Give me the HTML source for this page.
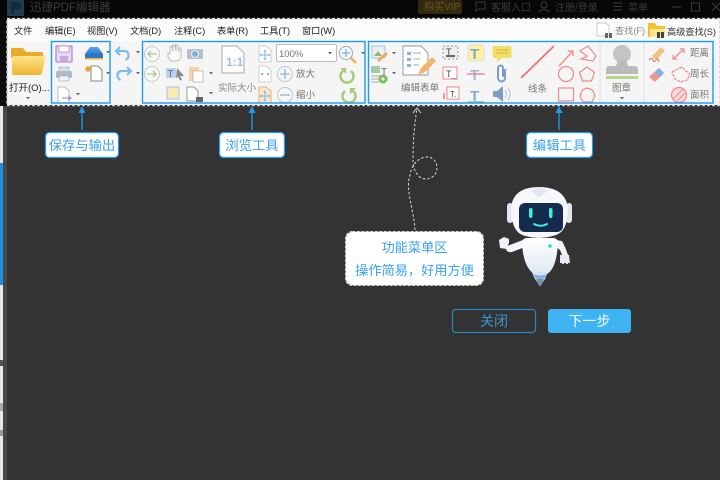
<!DOCTYPE html>
<html><head><meta charset="utf-8">
<style>
html,body{margin:0;padding:0;background:#333;width:720px;height:480px;overflow:hidden}
svg{display:block;position:absolute;left:0;top:0;filter:blur(.35px)}
text{font-family:"Liberation Sans","Noto Sans CJK SC",sans-serif}
</style></head><body>
<svg width="720" height="480" viewBox="0 0 720 480" xmlns="http://www.w3.org/2000/svg">
<defs>
<linearGradient id="folder" x1="0" y1="0" x2="0" y2="1"><stop offset="0" stop-color="#ffe58a"/><stop offset="1" stop-color="#eeb52e"/></linearGradient>
<linearGradient id="body" x1="0" y1="0" x2="0" y2="1"><stop offset="0" stop-color="#fff"/><stop offset="1" stop-color="#dfe9f5"/></linearGradient>
<linearGradient id="scan" x1="0" y1="0" x2="0" y2="1"><stop offset="0" stop-color="#5aa6e6"/><stop offset="1" stop-color="#2a7fd0"/></linearGradient>
<g id="tri"><path d="M0 0h4l-2 2.400z" fill="#666"/></g>
<g id="cross"><path d="M6 2v8M2 6h8" stroke="#7db8ea" stroke-width="1.100"/><path d="M6 .5l-1.800 2h3.600zM6 11.500l-1.800-2h3.600zM.5 6l2-1.800v3.600zM11.500 6l-2-1.800v3.600z" fill="#7db8ea"/></g>
</defs>
<!-- background -->
<rect width="720" height="480" fill="#333"/>
<rect x="0" y="105" width="3" height="375" fill="#e8e8e8"/>
<rect x="0" y="163" width="3" height="122" fill="#1c8fe0"/>
<rect x="3" y="105" width="4" height="375" fill="#484848"/>
<rect x="0" y="360" width="3" height="6" fill="#555"/>
<rect x="0" y="403" width="3" height="8" fill="#aaa"/>
<rect x="0" y="430" width="3" height="6" fill="#999"/>
<rect x="0" y="18" width="7" height="88" fill="#0c0c0c"/>
<!-- title bar -->
<rect width="720" height="18" fill="#070707"/>
<rect x="7" y="0" width="17" height="16" fill="#1f3d50"/>
<path d="M11 14V2h8l2 3v3l-2 2h-5v4z" fill="#14293a"/>
<text x="30" y="11" font-size="11.500" fill="#3c3c3c">迅捷PDF编辑器</text>
<rect x="418" y="0" width="44" height="14" rx="2" fill="#33290f"/>
<text x="424" y="10" font-size="10" fill="#6a5628">购买VIP</text>
<path d="M476 2h9v7h-6l-3 2z" fill="none" stroke="#3a3a3a"/>
<text x="491" y="11" font-size="10" fill="#3a3a3a">客服入口</text>
<circle cx="544" cy="5" r="3" fill="none" stroke="#3a3a3a"/><path d="M539 12q5-5 10 0" fill="none" stroke="#3a3a3a"/>
<text x="555" y="11" font-size="10" fill="#3a3a3a">注册/登录</text>
<path d="M613 3h9M613 6.500h9M613 10h9" stroke="#3a3a3a"/>
<text x="628" y="11" font-size="10" fill="#3a3a3a">菜单</text>
<path d="M672 7h9" stroke="#3a3a3a"/>
<rect x="691.500" y="3" width="8" height="8" fill="none" stroke="#3a3a3a"/>
<path d="M712 3l8 8M720 3l-8 8" stroke="#3a3a3a"/>

<!-- toolbar -->
<rect x="7" y="19" width="713" height="86" fill="#f5f5f5"/>
<rect x="7" y="19" width="713" height="22" fill="#fbfbfb"/>
<g font-size="9.200" fill="#1c1c1c">
<text x="14" y="34">文件</text><text x="45" y="34">编辑(E)</text><text x="87" y="34">视图(V)</text>
<text x="130" y="34">文档(D)</text><text x="174" y="34">注释(C)</text><text x="217" y="34">表单(R)</text>
<text x="260" y="34">工具(T)</text><text x="302" y="34">窗口(W)</text>
</g>
<!-- search right -->
<path d="M597 23h9l3 3v10h-12z" fill="#fff" stroke="#c8c8c8"/>
<rect x="605" y="33" width="3" height="5" fill="#667"/><rect x="609" y="33" width="3" height="5" fill="#667"/>
<text x="615" y="34" font-size="9.200" fill="#888">查找(F)</text>
<path d="M648 23h7l2 3h8v11h-17z" fill="#f2c230"/><path d="M650 29h15v8h-15z" fill="#ffe590"/>
<rect x="657" y="32" width="3" height="6" fill="#444"/><rect x="661" y="32" width="3" height="6" fill="#444"/>
<text x="667" y="35" font-size="9.200" fill="#333">高级查找(S)</text>

<!-- open -->
<path d="M11 49q0-1 1-1h11l3 4h15q2 0 2 2v4H11z" fill="#e9a92a"/>
<path d="M12 58q0-2 2-2h29q3 0 2 3l-3 14q-1 2-3 2H14q-2 0-2-2z" fill="url(#folder)"/>
<text x="9" y="91" font-size="9.500" fill="#222">打开(O)...</text>
<use href="#tri" x="26" y="97"/>

<!-- save group -->
<rect x="56" y="46" width="16" height="16" rx="1" fill="#e6d8ef" stroke="#b38ad0" stroke-width="1.300"/>
<rect x="59" y="46" width="10" height="6" fill="#fff" stroke="#b38ad0" stroke-width=".8"/>
<rect x="60" y="56" width="8" height="6" fill="#c7a8de"/>
<rect x="59" y="67" width="10" height="5" fill="#d8dde2" stroke="#9aa4ad" stroke-width=".6"/>
<rect x="56" y="71" width="16" height="7" rx="1" fill="#a9bccc"/>
<rect x="59" y="76" width="10" height="5" fill="#f3f3f3" stroke="#9aa4ad" stroke-width=".6"/>
<path d="M58 87h7l4 4v12H58z" fill="#fff" stroke="#bbb"/><path d="M62 98h9m-3-2l3 2-3 2" stroke="#a878d0" fill="none"/>
<use href="#tri" x="76" y="93"/>
<path d="M90 47h8l5 7H85z" fill="url(#scan)"/><rect x="85" y="54" width="18" height="4" fill="#2f75c0"/><rect x="85" y="58" width="18" height="1.500" fill="#e8b23a"/>
<use href="#tri" x="106" y="51"/>
<path d="M91 66h7l4 4v11H91z" fill="#fff" stroke="#888"/><circle cx="88" cy="69" r="2.800" fill="#f2a12e"/>
<use href="#tri" x="106" y="72"/>
<!-- undo redo -->
<path d="M120 47l-4 4 4 4M117 51h7q4.500 0 4.500 4.500 0 3-3 4.500" fill="none" stroke="#7dbbec" stroke-width="2.200"/>
<path d="M127 67l4 4-4 4M130 71h-8q-4.500 0-4.500 4.500 0 3 3 4.500" fill="none" stroke="#7dbbec" stroke-width="2.200"/>
<use href="#tri" x="136" y="51"/><use href="#tri" x="136" y="72"/>

<!-- browse group -->
<g fill="none" stroke="#c9c9c9">
<circle cx="152" cy="54" r="7.500" fill="#f8f8f8"/><circle cx="152" cy="74" r="7.500" fill="#f8f8f8"/></g>
<path d="M157 54h-9m3-3l-3 3 3 3" stroke="#a6cf8e" stroke-width="1.300" fill="none"/>
<path d="M147 74h9m-3-3l3 3-3 3" stroke="#a6cf8e" stroke-width="1.300" fill="none"/>
<path d="M170 47v7l-2-1v4q2 4 5 4h3q4 0 5-4v-9h-2v4l-1-7h-2v6l-1-6h-2v6l-1-5z" fill="#fafafa" stroke="#bbb"/>
<rect x="187" y="49" width="16" height="10" rx="1" fill="#b4c0cb"/><circle cx="195" cy="54" r="3.500" fill="#7cb1e2" stroke="#eee"/>
<rect x="166" y="68" width="10" height="10" fill="#bcd4ee"/><text x="167.500" y="77" font-size="10" fill="#667">T</text>
<path d="M177 68l7 8h-4l2 4-2 .5-2-4-2 2z" fill="#888"/>
<rect x="189" y="67" width="10" height="14" fill="#f5d3a6"/><rect x="193" y="71" width="10" height="11" fill="#fff" stroke="#aaa" stroke-width=".7"/>
<use href="#tri" x="209" y="72"/>
<rect x="167" y="87" width="12" height="12" fill="#fbe9ae" stroke="#9ec7ee"/>
<path d="M187 87h7l4 4v10H187z" fill="#fff" stroke="#999"/><rect x="196" y="97" width="7" height="5" fill="#666"/>
<use href="#tri" x="209" y="92"/>
<path d="M222 46h15l7 7v20h-22z" fill="#fff" stroke="#bbb" stroke-width="1.300"/>
<text x="226" y="66" font-size="12" font-weight="bold" fill="#9cc0dc">1:1</text>
<text x="218" y="91" font-size="9.500" fill="#888">实际大小</text>
<g fill="#fff" stroke="#c4c4c4" stroke-width=".8"><path d="M259 46h7l5 4v12h-12z"/><path d="M259 66h7l5 4v12h-12z"/></g>
<path d="M259 87h7l5 4v12h-12z" fill="#fbe7c8" stroke="#efb16a"/>
<use href="#cross" x="259" y="49"/><use href="#cross" x="259" y="90"/>
<g fill="#7db8ea"><rect x="261" y="73" width="2" height="2"/><rect x="267" y="73" width="2" height="2"/></g>
<rect x="276.500" y="44.500" width="60" height="17" rx="1.500" fill="#fff" stroke="#bbb"/>
<text x="279" y="57" font-size="9.500" fill="#777">100%</text><use href="#tri" x="328" y="52"/>
<circle cx="346" cy="53" r="6.500" fill="#f7fbff" stroke="#aaa"/><path d="M342 53h8M346 49v8" stroke="#6db2ea" stroke-width="1.300"/>
<path d="M351 58l5 5" stroke="#f0a83c" stroke-width="2.200"/>
<use href="#tri" x="361" y="52"/>
<circle cx="285" cy="74" r="7.500" fill="#f7f7f7" stroke="#bcc8d2"/><path d="M280 74h10M285 69v10" stroke="#86b5dd" stroke-width="1.300"/>
<text x="296" y="77" font-size="9.500" fill="#777">放大</text>
<circle cx="285" cy="95" r="7.500" fill="#f7f7f7" stroke="#bcc8d2"/><path d="M280 95h10" stroke="#86b5dd" stroke-width="1.300"/>
<text x="296" y="98" font-size="9.500" fill="#777">缩小</text>
<path d="M343 71a6.500 6.500 0 1 0 8 0" fill="none" stroke="#a5cb78" stroke-width="2.500"/><path d="M340 68h6v6z" fill="#a5cb78"/>
<path d="M353 91a6.500 6.500 0 1 1-8 0" fill="none" stroke="#a5cb78" stroke-width="2.500"/><path d="M356 88h-6v6z" fill="#a5cb78"/>

<!-- form group -->
<path d="M372 46h13v12h-13z" fill="#eee" stroke="#9ec7ee"/><path d="M374 56l4-5 4 5z" fill="#8bb87c"/>
<path d="M377 60l9-8 2 2-9 8z" fill="#f2a65e"/>
<use href="#tri" x="392" y="52"/>
<rect x="371" y="66" width="9" height="7" fill="#a5c9a0"/><text x="381" y="75" font-size="10" fill="#666">T</text>
<path d="M371 76h10M371 79h8M371 82h8" stroke="#aaa"/><circle cx="383" cy="79" r="4.500" fill="#7cbd5a"/><path d="M381 79h4M383 77v4" stroke="#fff"/>
<use href="#tri" x="392" y="72"/>
<path d="M403 46h18l7 7v22h-25z" fill="#fff" stroke="#aaa" stroke-width="1.200"/>
<g fill="#86b5dd"><rect x="407" y="52" width="4" height="3"/><rect x="407" y="58" width="4" height="3"/><rect x="407" y="64" width="4" height="3"/></g>
<path d="M413 53h8M413 59h7M413 65h6" stroke="#a8a8a8"/>
<path d="M418 75l3-7 11-11 4 4-11 11z" fill="#f5b26b"/>
<text x="401" y="91" font-size="9.500" fill="#777">编辑表单</text>
<rect x="443" y="46" width="15" height="13" fill="#eee" stroke="#999" stroke-dasharray="2 2"/><text x="446" y="55" font-size="9" fill="#444">T</text><path d="M446 56h9" stroke="#666" stroke-width="2"/>
<rect x="443" y="67" width="14" height="12" fill="#fff" stroke="#e88"/><text x="446" y="77" font-size="9" fill="#444">T_</text>
<rect x="447" y="87" width="12" height="12" fill="#fff" stroke="#e88"/><text x="450" y="97" font-size="8" fill="#444">T.</text><path d="M444 93v6" stroke="#d44"/>
<rect x="468" y="45" width="16" height="16" rx="3" fill="#fdf39a" stroke="#ddd"/><text x="470" y="59" font-size="15" font-weight="bold" fill="#7eaadf">T</text>
<text x="470" y="80" font-size="15" font-weight="bold" fill="#9bb9de">T</text><path d="M467 74h18" stroke="#e77" stroke-width="1.300"/>
<text x="470" y="101" font-size="15" font-weight="bold" fill="#7eaadf">T</text><path d="M468 102h16" stroke="#8bc88a" stroke-width="1.600"/>
<path d="M494 46h16q1.500 0 1.500 1.500v9q0 1.500-1.500 1.500h-8l-5 4v-4h-3q-1.500 0-1.500-1.500v-9q0-1.500 1.500-1.500z" fill="#f2df6a"/><path d="M496 50h12M496 53h12" stroke="#c6a92e" stroke-width=".8"/>
<path d="M505 69v9a3.500 3.500 0 0 1-7 0v-10a2 2 0 0 1 5 0v9" fill="none" stroke="#7a9ec8" stroke-width="2"/>
<path d="M493 91h4l6-5v16l-6-5h-4z" fill="#7a9ec8"/><path d="M505 90q3 4 0 8M508 88q4 6 0 12" stroke="#a8c0dc" fill="none"/>
<!-- lines -->
<path d="M521 78l33-32" stroke="#ee7272" stroke-width="1.700"/>
<text x="528" y="92" font-size="9.500" fill="#777">线条</text>
<path d="M559 66l14-15m-5 0h5v5" stroke="#ee8a8a" stroke-width="1.300" fill="none"/>
<path d="M580 51l8-5 8 10-3 5-12-2 6-3z" fill="none" stroke="#ee8a8a" stroke-width="1.200"/>
<circle cx="566" cy="74" r="7.500" fill="none" stroke="#ee8a8a" stroke-width="1.200"/>
<path d="M587 67l7.500 5.500-3 8.500h-9l-3-8.500z" fill="none" stroke="#ee8a8a" stroke-width="1.200"/>
<rect x="558.500" y="88" width="15" height="13" fill="none" stroke="#ee8a8a" stroke-width="1.200"/>
<path d="M587 88l5.500 2 2.500 6-3 6h-9l-3-6 2.500-6z" fill="none" stroke="#ee8a8a" stroke-width="1.200"/>
<path d="M600 42v61M644 42v61" stroke="#dedede"/>
<!-- stamp -->
<circle cx="622" cy="54" r="9" fill="#c4c4c4"/><path d="M618 60h8l2 6h7q3 0 3 4v4h-32v-4q0-4 3-4h7z" fill="#bbb"/>
<rect x="606" y="76" width="32" height="3" fill="#b7d58f"/>
<text x="612" y="91" font-size="9.500" fill="#777">图章</text>
<use href="#tri" x="620" y="97"/>
<!-- measure -->
<path d="M652 56l9-9 4 4-9 9z" fill="#f5c07a"/><path d="M649 60q3-3 4 0t3 0 3 2" stroke="#e66" fill="none"/>
<path d="M649 77l10-9 5 5-9 9z" fill="#ea9a8a"/><path d="M655 72l4-4 5 5-4 4z" fill="#74b6e6"/>
<path d="M673 59l11-10m-4 0h4v4m-11 2v4h4" stroke="#ee8a8a" fill="none" stroke-width="1.200"/>
<text x="690" y="56" font-size="9.500" fill="#777">距离</text>
<path d="M672 72l6-3 4-2 4 4 4 3-3 6-6 2-6-3z" fill="none" stroke="#ee8a8a" stroke-width="1.200" stroke-dasharray="3 1"/>
<text x="690" y="77" font-size="9.500" fill="#777">周长</text>
<circle cx="679" cy="95" r="7.500" fill="#f8dcdc" stroke="#ee8a8a" stroke-width="1.200"/><path d="M673 99l10-10M677 101l8-8" stroke="#ee8a8a"/>
<text x="690" y="98" font-size="9.500" fill="#777">面积</text>

<!-- blue boxes -->
<g fill="none" stroke="#1b9af0" stroke-width="1.400">
<rect x="51.500" y="41.500" width="58.500" height="61.500"/>
<rect x="142.500" y="41.500" width="222.500" height="61.500"/>
<rect x="368.500" y="41.500" width="344.500" height="61.500"/>
</g>
<!-- dashed toolbar border -->
<rect x="7" y="18.500" width="713" height="87" fill="none" stroke="#ccc" stroke-width="1.500" stroke-dasharray="3 2"/>

<!-- arrows + labels -->
<g stroke="#1b9af0" stroke-width="1.300" fill="#1b9af0">
<path d="M82 113v17M252 113v17M559 113v17" fill="none"/>
<path d="M82 106l-3.500 7h7z M252 106l-3.500 7h7z M559 106l-3.500 7h7z" stroke="none"/>
</g>
<g fill="#fff" stroke="#1b9af0" stroke-width="1.200">
<rect x="45.500" y="132.500" width="73" height="25" rx="4"/>
<rect x="219.500" y="132.500" width="65" height="25" rx="4"/>
<rect x="526.500" y="132.500" width="66" height="25" rx="4"/>
</g>
<g font-size="13.300" fill="#3aa3f0" text-anchor="middle">
<text x="82" y="150">保存与输出</text>
<text x="252" y="150">浏览工具</text>
<text x="559.500" y="150">编辑工具</text>
</g>

<!-- dashed curve -->
<path d="M415 230C414 210 405 190 410 175C412 163 420 157 427 157C434 157 437 163 437 168C437 175 431 179 426 179C419 179 414 172 413 163C413 145 414 125 417 109" fill="none" stroke="#d8d8d8" stroke-dasharray="2.500 2"/>
<path d="M413 113l4-5 4 5" fill="none" stroke="#d8d8d8"/>
<!-- callout -->
<rect x="345.500" y="231.500" width="138" height="54" rx="7" fill="#fff" stroke="#777"/>
<rect x="345.500" y="231.500" width="138" height="54" rx="7" fill="none" stroke="#ddd" stroke-dasharray="2.500 2"/>
<g font-size="13.200" fill="#3aa3f0" text-anchor="middle">
<text x="414.500" y="252">功能菜单区</text>
<text x="414.500" y="275">操作简易，好用方便</text>
</g>

<!-- robot -->
<g>
<!-- left arm + hand -->
<path d="M499 240l5-3 5 2 0 4-3 6-6-1z" fill="#eef2f7"/>
<path d="M507 246l16-6 2 7-13 5q-5 1-6-3z" fill="#f2f5fa"/>
<!-- right arm + hand -->
<path d="M556 240l6 1 3 6 3 8h-6l-2-5-5-4z" fill="#eef2f7"/>
<path d="M560 255h9l1 8h-2v1h-2v-1h-2v1h-2v-1h-2z" fill="#e6eaf0"/>
<!-- torso -->
<path d="M522 243q0-5 5-5h26q5 0 5 5-1 18-6 26-3 5-7 5h-8q-5 0-8-5-6-8-7-26z" fill="url(#body)"/>
<path d="M532 272h16q-2 5-3 7l-5 7-5-7q-2-3-3-7z" fill="#dbe5f2"/>
<path d="M533 274q7 3 14 0l-2 4q-5 2-10 0z" fill="#7fb0ee"/>
<path d="M536 279h8l-3 7h-2z" fill="#7c91a4"/>
<circle cx="550" cy="246" r="1.800" fill="#25d7c9"/>
<!-- head -->
<rect x="507" y="203" width="6" height="20" rx="3" fill="#e0e6ef"/>
<rect x="566" y="203" width="6" height="20" rx="3" fill="#e0e6ef"/>
<path d="M511 208q2-21 28-21t29 21q0 16-6 23-5 6-23 7-18-1-22-7-6-7-6-23z" fill="#f6f8fc"/>
<path d="M530 191l9-4 9 4-9 6z" fill="#e3e8f0"/>
<rect x="519" y="203" width="44" height="29" rx="6" fill="#142a4e"/>
<rect x="529" y="208" width="3.500" height="10" rx="1.700" fill="#3ff0d6"/>
<rect x="549" y="208" width="3.500" height="10" rx="1.700" fill="#3ff0d6"/>
<path d="M534 224q6.500 3.500 13 0" fill="none" stroke="#3ff0d6" stroke-width="2" stroke-linecap="round"/>
</g>

<!-- buttons -->
<rect x="452.500" y="309.500" width="83" height="23" rx="3" fill="none" stroke="#2d87b8" stroke-width="1.200"/>
<text x="494" y="326" font-size="14" fill="#3a97cc" text-anchor="middle">关闭</text>
<rect x="548" y="309" width="83" height="24" rx="3" fill="#3eb4f5"/>
<text x="589.500" y="326" font-size="14" fill="#fff" text-anchor="middle">下一步</text>
</svg>
</body></html>
